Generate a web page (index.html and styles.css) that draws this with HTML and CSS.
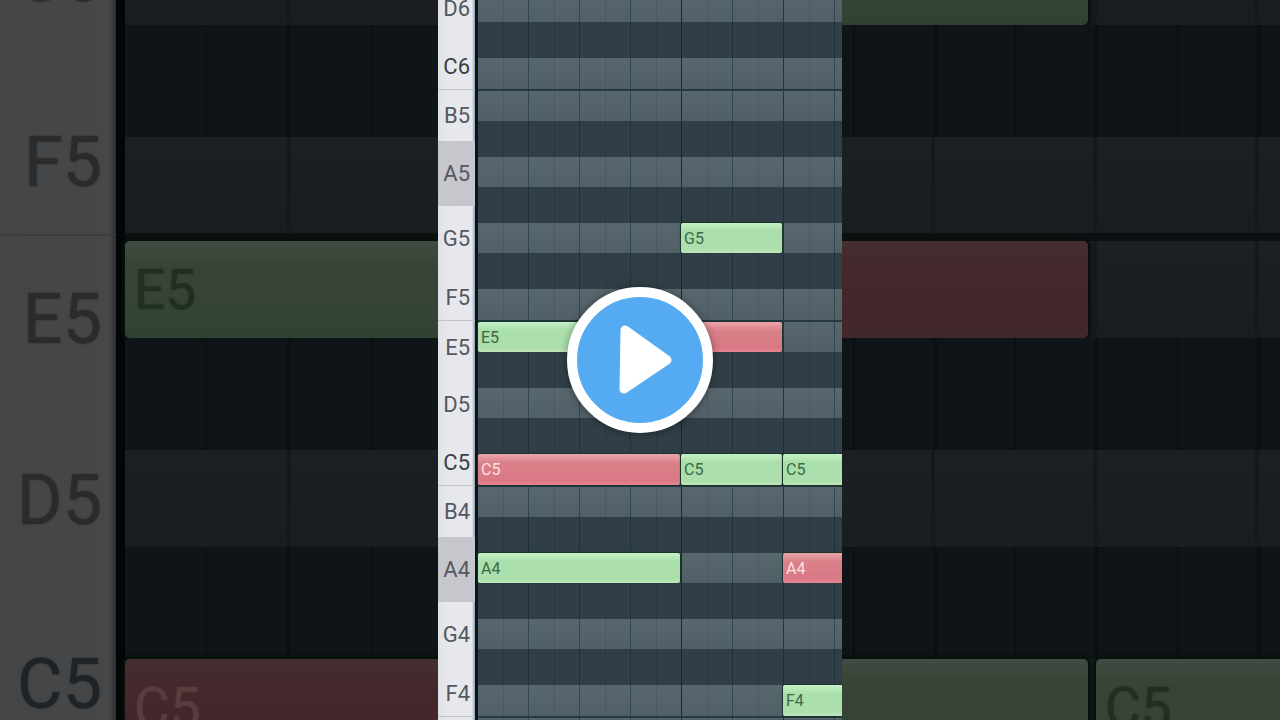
FILE: index.html
```html
<!DOCTYPE html>
<html lang="en">
<head>
<meta charset="utf-8">
<title>Piano roll</title>
<link rel="stylesheet" href="styles.css">
</head>
<body>
<main class="stage">
  <section class="roll large" aria-hidden="true">
    <div class="keys">
      <div class="key g">G5</div>
      <div class="key f">F5</div>
      <div class="key e">E5</div>
      <div class="key d">D5</div>
      <div class="key c">C5</div>
    </div>
    <div class="lanes">
      <div class="lane"></div>
      <div class="lane sharp"></div>
      <div class="lane edge"></div>
      <div class="lane"><div class="note green whole">E5</div></div>
      <div class="lane sharp"></div>
      <div class="lane"></div>
      <div class="lane sharp"></div>
      <div class="lane"><div class="note red whole">C5</div></div>
    </div>
  </section>

  <section class="roll video" aria-label="Piano roll video">
    <div class="keys">
      <div class="key d">D6</div>
      <div class="key c strong">C6</div>
      <div class="key b">B5</div>
      <div class="key a">A5</div>
      <div class="key g">G5</div>
      <div class="key f">F5</div>
      <div class="key e">E5</div>
      <div class="key d">D5</div>
      <div class="key c strong">C5</div>
      <div class="key b">B4</div>
      <div class="key a">A4</div>
      <div class="key g">G4</div>
      <div class="key f">F4</div>
      <div class="key cut"></div>
    </div>
    <div class="lanes">
      <div class="lane"></div>
      <div class="lane sharp"></div>
      <div class="lane edge"></div>
      <div class="lane"></div>
      <div class="lane sharp"></div>
      <div class="lane"></div>
      <div class="lane sharp"></div>
      <div class="lane"><div class="note green second">G5</div></div>
      <div class="lane sharp"></div>
      <div class="lane edge"></div>
      <div class="lane"><div class="note green first">E5</div><div class="note red second"></div></div>
      <div class="lane sharp"></div>
      <div class="lane"></div>
      <div class="lane sharp"></div>
      <div class="lane edge"><div class="note red first">C5</div><div class="note green second">C5</div><div class="note green third">C5</div></div>
      <div class="lane"></div>
      <div class="lane sharp"></div>
      <div class="lane"><div class="note green first">A4</div><div class="note red third">A4</div></div>
      <div class="lane sharp"></div>
      <div class="lane"></div>
      <div class="lane sharp"></div>
      <div class="lane edge"><div class="note green third">F4</div></div>
      <div class="lane cut"></div>
    </div>
    <button class="play" type="button" aria-label="Play">
      <svg viewBox="0 0 126 126" aria-hidden="true"><path d="M48 33 L47 92 L90 63 Z"/></svg>
    </button>
  </section>

  <section class="roll large right" aria-hidden="true">
    <div class="lanes">
      <div class="lane"><div class="note green first"></div></div>
      <div class="lane sharp"></div>
      <div class="lane edge"></div>
      <div class="lane"><div class="note red first"></div></div>
      <div class="lane sharp"></div>
      <div class="lane"></div>
      <div class="lane sharp"></div>
      <div class="lane"><div class="note green first"></div><div class="note green second">C5</div></div>
    </div>
  </section>
</main>
</body>
</html>
```

FILE: styles.css
```css
* { box-sizing: border-box; }

body {
  margin: 0;
  background: #0e1417;
  font-family: Roboto, "Liberation Sans", sans-serif;
}

.stage {
  display: grid;
  grid-template-columns: 1fr 404px 1fr;
  height: 100vh;
  overflow: hidden;
}

.roll {
  display: flex;
  min-width: 0;
  height: 100vh;
  overflow: hidden;
}

.keys,
.lanes {
  display: flex;
  flex-direction: column;
}

.lanes {
  flex: 1;
  min-width: 0;
}

.key,
.lane { flex: none; }

.key {
  display: flex;
  align-items: center;
  justify-content: flex-end;
}

.lane { display: grid; }

.note {
  overflow: hidden;
  white-space: nowrap;
}

.first { grid-column: 1; }
.second { grid-column: 2; }
.third { grid-column: 3; }
.whole { grid-column: 1 / -1; }

/* Video frame */
.video { position: relative; }

.video .keys {
  width: 40px;
  justify-content: flex-end;
  border-right: 3px solid #07151c;
  background: linear-gradient(90deg, #dfe3e7, #e6e8ee 30%, #e6e8ee 92%, #8f9ca4);
}

.video .lanes { justify-content: flex-end; }

.video .key {
  padding-right: 5px;
  color: #55585e;
  font-size: 22px;
  line-height: 24px;
}

.video .strong { color: #3a3d43; }
.video .a { height: 65px; background: #c5c7cc; }
.video .b { height: 51px; }
.video .c { height: 49px; padding-top: 4px; border-bottom: 1px solid #c3c6cc; }
.video .d { height: 65px; }
.video .e { height: 51px; padding-top: 2px; }
.video .f { height: 49px; padding-top: 4px; border-bottom: 1px solid #c3c6cc; }
.video .g { height: 66px; }
.video .key.cut { height: 3px; }

.video .lane {
  grid-template-columns: 203px 102px 1fr;
  height: 30px;
  background:
    linear-gradient(#172b33, #172b33) 203px 0 / 1px 100% no-repeat,
    linear-gradient(#203740, #203740) 305px 0 / 1px 100% no-repeat,
    repeating-linear-gradient(90deg, transparent 0 25px, #24394030 25px 26px, transparent 26px 50px, #1d343c99 50px 51px),
    linear-gradient(#58666d, #516068);
}

.video .sharp {
  height: 36px;
  background:
    linear-gradient(#142830, #142830) 203px 0 / 1px 100% no-repeat,
    linear-gradient(#1b3038, #1b3038) 305px 0 / 1px 100% no-repeat,
    repeating-linear-gradient(90deg, transparent 0 25px, #1a2e3660 25px 26px, transparent 26px 50px, #182c34b0 50px 51px),
    #303f47;
}

.video .edge {
  height: 33px;
  border-bottom: 2px solid #253941;
}

.video .lane.cut { height: 2px; }

.video .note {
  padding-left: 3px;
  border-radius: 2px;
  margin-right: 1px;
  font-size: 16px;
  line-height: 32px;
  box-shadow: 0 0 1px 1px #193229;
}

.video .third { margin-right: 0; border-radius: 2px 0 0 2px; }

.video .green {
  background: linear-gradient(#c5f1c6, #a9dfaa 28%, #addfae 85%, #c0e6b9);
  color: #3c6844;
}

.video .red {
  background: linear-gradient(#eba5ab, #d98088 30%, #d97985 85%, #e58492);
  color: #ffe0e3;
}

.play {
  position: absolute;
  top: 50%;
  left: 50%;
  width: 146px;
  height: 146px;
  padding: 0;
  border: 10px solid #fff;
  border-radius: 50%;
  background: #54abf1;
  box-shadow: 0 1px 8px #0006;
  transform: translate(-50%, -50%);
  cursor: pointer;
}

.play svg { display: block; width: 100%; }

.play path {
  fill: #fff;
  stroke: #fff;
  stroke-width: 9px;
  stroke-linejoin: round;
}

/* Dimmed close-ups on both sides */
.large .keys {
  width: 125px;
  margin-top: -127px;
  border-right: 9px solid #020608;
  background: linear-gradient(90deg, #434547, #464749 94%, #2b2e30);
}

.large .key {
  padding-right: 14px;
  color: #292b2d;
  font-size: 70px;
  line-height: 80px;
  text-shadow: 0 0 2px #292b2d;
}

.large .key.g { height: 208px; }
.large .key.f { height: 155px; padding-top: 8px; border-bottom: 2px solid #3c3c3f; }
.large .key.e { height: 161px; padding-top: 4px; }
.large .key.d { height: 205px; }
.large .key.c { height: 155px; padding-top: 8px; color: #202325; }

.large .lanes { margin-top: -72px; }

.large .lane {
  grid-template-columns: 246px 8px 1fr;
  height: 97px;
  background:
    repeating-linear-gradient(90deg, transparent 0 162px, #15191c 162px 166px),
    linear-gradient(#1c2022, #191d20);
}

.large .sharp {
  height: 112px;
  background: repeating-linear-gradient(90deg, #0e1417 0 79px, #0c1114 79px 82px, #0e1417 82px 162px, #0a0f11 162px 166px);
}

.large .edge {
  height: 104px;
  border-bottom: 8px solid #0b1113;
}

.large .note {
  padding-left: 9px;
  border-radius: 5px;
  font-size: 55px;
  line-height: 99px;
  box-shadow: 0 0 3px 3px #07110b;
}

.large .green {
  background: linear-gradient(#404b43, #384535 25%, #354337 80%, #304032);
  color: #202f21;
  text-shadow: 0 0 2px #202f21;
}

.large .red {
  background: linear-gradient(#462e31, #43282c 25%, #42262b 80%, #41292b);
  color: #5a3b3e;
  text-shadow: 0 0 2px #5a3b3e;
}

.large .whole { border-radius: 5px 0 0 5px; }

.right .lane {
  background:
    repeating-linear-gradient(90deg, transparent 0 89px, #14191c 89px 93px, transparent 93px 162px),
    linear-gradient(#1c2022, #191d20);
}

.right .sharp {
  background: repeating-linear-gradient(90deg, #0e1417 0 10px, #0b1012 10px 13px, #0e1417 13px 91px, #0a0f11 91px 95px, #0e1417 95px 162px);
}

.right .first { border-radius: 0 5px 5px 0; }
.right .second { grid-column: 3; border-radius: 5px 0 0 5px; }
```
